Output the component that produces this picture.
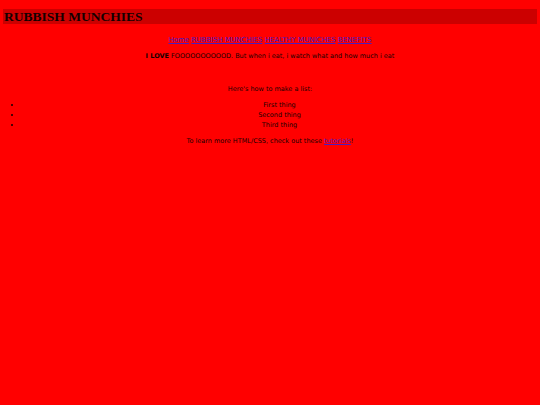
const LINKS = ["Home", "RUBBISH MUNCHIES", "HEALTHY MUNICHES", "BENEFITS"];

export default function App() {
  return (
    <div className="min-h-[405px] bg-[#ff0000] px-[3px] pt-[9px] text-[#140000]">
      <h1 className="h-[15px] bg-[#cc0000] pl-[1px] font-['Liberation_Serif',serif] text-[13.5px] font-extrabold leading-[15px] text-[#140000]">
        RUBBISH MUNCHIES
      </h1>
      <div className="font-['DejaVu_Sans',sans-serif] text-[6.5px] leading-[10px]">
        <p className="mt-[11px] text-center text-[7px]">
          {LINKS.map((l, i) => (
            <span key={l}>
              <a href="#" className="text-[#4a1cc0] underline">{l}</a>
              {i < LINKS.length - 1 ? " " : ""}
            </span>
          ))}
        </p>
        <p className="mt-[6px] text-center">
          <b>I LOVE</b> FOOOOOOOOOOD. But when i eat, i watch what and how much i eat
        </p>
        <p className="mt-[23px] text-center">Here's how to make a list:</p>
        <ul className="mt-[6px] list-disc pl-[19px] text-center">
          <li>First thing</li>
          <li>Second thing</li>
          <li>Third thing</li>
        </ul>
        <p className="mt-[6px] text-center">
          To learn more HTML/CSS, check out these{" "}
          <a href="#" className="text-[#4a1cc0] underline">tutorials</a>!
        </p>
      </div>
    </div>
  );
}
